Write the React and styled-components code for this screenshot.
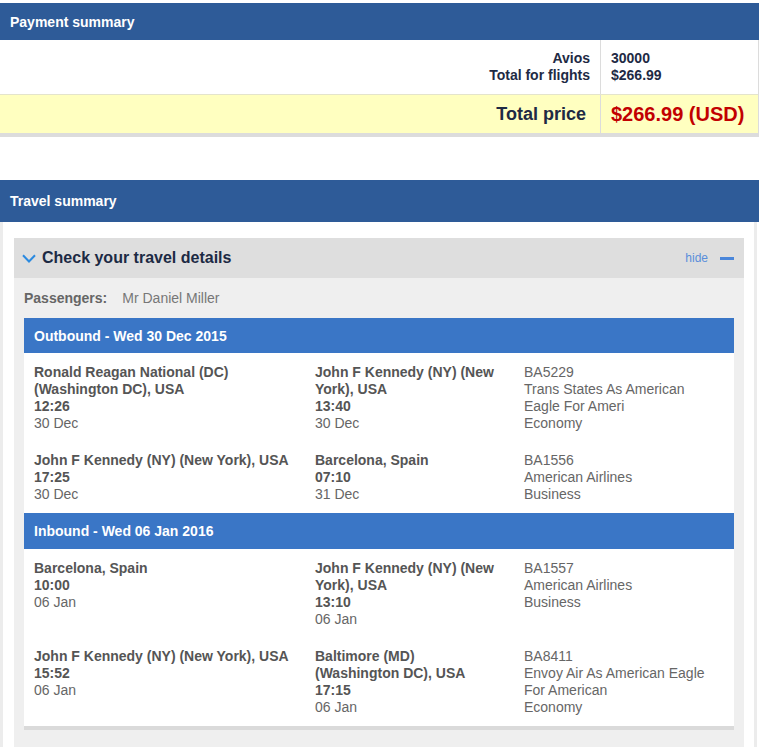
import React from 'react';
import styled, { createGlobalStyle } from 'styled-components';

const GlobalStyle = createGlobalStyle`
  body {
    margin: 0;
    background: #fff;
    font-family: "Liberation Sans", Arial, sans-serif;
    font-size: 14px;
  }
`;

const Page = styled.div`
  width: 759px;
  padding-top: 3px;
`;

const SectionBar = styled.div`
  display: flex;
  align-items: center;
  height: ${({ $height }) => $height}px;
  padding: 0 10px;
  background: #2e5b98;
  color: #fff;
  font-weight: bold;
  font-size: 14px;
`;

const PaymentTable = styled.div`
  border-right: 1px solid #dcdcdc;
  border-bottom: 4px solid #dcdcdc;
`;

const SummaryRow = styled.div`
  display: grid;
  grid-template-columns: 1fr 157px;
  background: ${({ $highlight }) => ($highlight ? '#ffffc0' : '#fff')};
  border-top: ${({ $highlight }) => ($highlight ? '1px solid #e4e4cc' : 'none')};
  color: #1e2a44;
  font-weight: bold;
`;

const LabelCell = styled.div`
  display: flex;
  flex-direction: column;
  justify-content: center;
  align-items: flex-end;
  padding: ${({ $big }) => ($big ? '0 14px 0 0' : '10px 10px 10px 0')};
  height: ${({ $big }) => ($big ? '38px' : 'auto')};
  border-right: 1px solid #dcdcdc;
  font-size: ${({ $big }) => ($big ? '18px' : '14px')};
  line-height: 17px;
`;

const ValueCell = styled.div`
  display: flex;
  flex-direction: column;
  justify-content: center;
  padding: ${({ $big }) => ($big ? '0 0 0 10px' : '10px 0 10px 10px')};
  font-size: ${({ $big }) => ($big ? '20px' : '14px')};
  color: ${({ $big }) => ($big ? '#c20000' : '#1e2a44')};
  line-height: 17px;
`;

const TravelSection = styled.div`
  margin-top: 43px;
`;

const Panel = styled.div`
  width: 757px;
  box-sizing: border-box;
  border-left: 3px solid #ececec;
  border-right: 3px solid #ececec;
  padding: 16px 10px 0 11px;
`;

const DetailsBox = styled.div`
  background: #efefef;
  padding-bottom: 21px;
`;

const DetailsHeader = styled.div`
  display: flex;
  align-items: center;
  height: 40px;
  padding: 0 10px 0 8px;
  background: #dedede;
`;

const DetailsTitle = styled.div`
  flex: 1;
  display: flex;
  align-items: center;
  gap: 6px;
  font-size: 16px;
  font-weight: bold;
  color: #1c2a44;
`;

const HideLink = styled.div`
  display: flex;
  align-items: center;
  gap: 12px;
  font-size: 12px;
  color: #5a8edb;
`;

const MinusBar = styled.span`
  display: block;
  width: 14px;
  height: 3px;
  background: #4a86da;
`;

const Passengers = styled.div`
  padding: 12px 10px 11px;
  line-height: 17px;
  color: #777;

  strong {
    color: #666;
    margin-right: 15px;
  }
`;

const Card = styled.div`
  margin: 0 10px;
  background: #fff;
  box-shadow: 0 4px 0 #dadada;
`;

const LegBar = styled.div`
  display: flex;
  align-items: center;
  height: ${({ $height }) => $height}px;
  padding: 0 10px;
  background: #3a76c6;
  color: #fff;
  font-weight: bold;
`;

const Segments = styled.div`
  display: flex;
  flex-direction: column;
  gap: 20px;
  padding: 11px 10px 10px;
`;

const Segment = styled.div`
  display: grid;
  grid-template-columns: 281px 209px 1fr;
  line-height: 17px;
  color: #666;
`;

const Cell = styled.div`
  padding-right: ${({ $pad }) => $pad}px;

  b {
    display: block;
    color: #555;
  }

  span {
    display: block;
  }
`;

const Chevron = () => (
  <svg width="14" height="9" viewBox="0 0 14 9">
    <polyline points="1,1.2 7,7.5 13,1.2" fill="none" stroke="#2b8ae0" strokeWidth="2" />
  </svg>
);

const legs = [
  {
    title: 'Outbound - Wed 30 Dec 2015',
    height: 35,
    flights: [
      {
        from: 'Ronald Reagan National (DC) (Washington DC), USA',
        dep: '12:26',
        depDate: '30 Dec',
        to: 'John F Kennedy (NY) (New York), USA',
        arr: '13:40',
        arrDate: '30 Dec',
        info: ['BA5229', 'Trans States As American', 'Eagle For Ameri', 'Economy'],
      },
      {
        from: 'John F Kennedy (NY) (New York), USA',
        dep: '17:25',
        depDate: '30 Dec',
        to: 'Barcelona, Spain',
        arr: '07:10',
        arrDate: '31 Dec',
        info: ['BA1556', 'American Airlines', 'Business'],
      },
    ],
  },
  {
    title: 'Inbound - Wed 06 Jan 2016',
    height: 36,
    flights: [
      {
        from: 'Barcelona, Spain',
        dep: '10:00',
        depDate: '06 Jan',
        to: 'John F Kennedy (NY) (New York), USA',
        arr: '13:10',
        arrDate: '06 Jan',
        info: ['BA1557', 'American Airlines', 'Business'],
      },
      {
        from: 'John F Kennedy (NY) (New York), USA',
        dep: '15:52',
        depDate: '06 Jan',
        to: 'Baltimore (MD) (Washington DC), USA',
        arr: '17:15',
        arrDate: '06 Jan',
        info: ['BA8411', 'Envoy Air As American Eagle For American', 'Economy'],
      },
    ],
  },
];

const App = () => (
  <Page>
    <GlobalStyle />
    <SectionBar $height={37}>Payment summary</SectionBar>
    <PaymentTable>
      <SummaryRow>
        <LabelCell>
          <span>Avios</span>
          <span>Total for flights</span>
        </LabelCell>
        <ValueCell>
          <span>30000</span>
          <span>$266.99</span>
        </ValueCell>
      </SummaryRow>
      <SummaryRow $highlight>
        <LabelCell $big>Total price</LabelCell>
        <ValueCell $big>$266.99 (USD)</ValueCell>
      </SummaryRow>
    </PaymentTable>

    <TravelSection>
      <SectionBar $height={42}>Travel summary</SectionBar>
      <Panel>
        <DetailsBox>
          <DetailsHeader>
            <DetailsTitle>
              <Chevron />
              Check your travel details
            </DetailsTitle>
            <HideLink>
              hide
              <MinusBar />
            </HideLink>
          </DetailsHeader>
          <Passengers>
            <strong>Passengers:</strong>Mr Daniel Miller
          </Passengers>
          <Card>
            {legs.map((leg) => (
              <React.Fragment key={leg.title}>
                <LegBar $height={leg.height}>{leg.title}</LegBar>
                <Segments>
                  {leg.flights.map((f) => (
                    <Segment key={f.info[0]}>
                      <Cell $pad={10}>
                        <b>{f.from}</b>
                        <b>{f.dep}</b>
                        <span>{f.depDate}</span>
                      </Cell>
                      <Cell $pad={25}>
                        <b>{f.to}</b>
                        <b>{f.arr}</b>
                        <span>{f.arrDate}</span>
                      </Cell>
                      <Cell $pad={0}>
                        {f.info[0] === 'BA5229' ? (
                          f.info.map((line) => <span key={line}>{line}</span>)
                        ) : (
                          <>
                            <span>{f.info[0]}</span>
                            <div>{f.info[1]}</div>
                            <span>{f.info[2]}</span>
                          </>
                        )}
                      </Cell>
                    </Segment>
                  ))}
                </Segments>
              </React.Fragment>
            ))}
          </Card>
        </DetailsBox>
      </Panel>
    </TravelSection>
  </Page>
);

export default App;
